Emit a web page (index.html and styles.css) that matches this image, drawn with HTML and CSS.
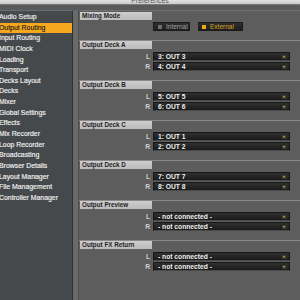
FILE: index.html
```html
<!DOCTYPE html>
<html>
<head>
<meta charset="utf-8">
<link rel="stylesheet" href="styles.css">
</head>
<body>
<div class="window">
  <div class="titlebar"><span class="title">Preferences</span></div>
  <div class="main">
    <nav class="sidebar">
      <ul class="nav">
        <li>Audio Setup</li>
        <li class="active">Output Routing</li>
        <li>Input Routing</li>
        <li>MIDI Clock</li>
        <li>Loading</li>
        <li>Transport</li>
        <li>Decks Layout</li>
        <li>Decks</li>
        <li>Mixer</li>
        <li>Global Settings</li>
        <li>Effects</li>
        <li>Mix Recorder</li>
        <li>Loop Recorder</li>
        <li>Broadcasting</li>
        <li>Browser Details</li>
        <li>Layout Manager</li>
        <li>File Management</li>
        <li>Controller Manager</li>
      </ul>
    </nav>
    <div class="gutter"></div>
    <section class="content">
      <div class="group first">
        <div class="ghead">Mixing Mode</div>
        <div class="radios">
          <div class="radio"><span class="box"></span><span>Internal</span></div>
          <div class="radio on"><span class="box"></span><span>External</span></div>
        </div>
      </div>
      <div class="group">
        <div class="ghead">Output Deck A</div>
        <div class="row"><span class="lbl">L</span><div class="sel"><span>3: OUT 3</span><i class="arrow"></i></div></div>
        <div class="row"><span class="lbl">R</span><div class="sel"><span>4: OUT 4</span><i class="arrow"></i></div></div>
      </div>
      <div class="group">
        <div class="ghead">Output Deck B</div>
        <div class="row"><span class="lbl">L</span><div class="sel"><span>5: OUT 5</span><i class="arrow"></i></div></div>
        <div class="row"><span class="lbl">R</span><div class="sel"><span>6: OUT 6</span><i class="arrow"></i></div></div>
      </div>
      <div class="group">
        <div class="ghead">Output Deck C</div>
        <div class="row"><span class="lbl">L</span><div class="sel"><span>1: OUT 1</span><i class="arrow"></i></div></div>
        <div class="row"><span class="lbl">R</span><div class="sel"><span>2: OUT 2</span><i class="arrow"></i></div></div>
      </div>
      <div class="group">
        <div class="ghead">Output Deck D</div>
        <div class="row"><span class="lbl">L</span><div class="sel"><span>7: OUT 7</span><i class="arrow"></i></div></div>
        <div class="row"><span class="lbl">R</span><div class="sel"><span>8: OUT 8</span><i class="arrow"></i></div></div>
      </div>
      <div class="group">
        <div class="ghead">Output Preview</div>
        <div class="row"><span class="lbl">L</span><div class="sel"><span>- not connected -</span><i class="arrow"></i></div></div>
        <div class="row"><span class="lbl">R</span><div class="sel"><span>- not connected -</span><i class="arrow"></i></div></div>
      </div>
      <div class="group">
        <div class="ghead">Output FX Return</div>
        <div class="row"><span class="lbl">L</span><div class="sel"><span>- not connected -</span><i class="arrow"></i></div></div>
        <div class="row"><span class="lbl">R</span><div class="sel"><span>- not connected -</span><i class="arrow"></i></div></div>
      </div>
    </section>
  </div>
</div>
</body>
</html>
```

FILE: styles.css
```css
html, body {
  margin: 0;
  padding: 0;
  width: 300px;
  height: 300px;
  overflow: hidden;
  background: #5a5a5a;
  font-family: "Liberation Sans", Arial, sans-serif;
}
.window {
  width: 300px;
  height: 300px;
  display: flex;
  flex-direction: column;
}
.titlebar {
  height: 4px;
  flex: none;
  background: linear-gradient(#e2e2e2, #c9c9c9);
  border-bottom: 1px solid #7a7a7a;
  overflow: hidden;
  text-align: center;
}
.title {
  display: block;
  font-size: 7px;
  line-height: 7px;
  margin-top: -3px;
  color: #555;
}
.main {
  flex: 1;
  display: flex;
  padding-top: 5px;
  min-height: 0;
}
.sidebar {
  width: 73px;
  flex: none;
  background: #46494b;
  border-top: 1px solid #6a6d6f;
  border-right: 1px solid #2f3234;
  border-top-right-radius: 2px;
  box-sizing: border-box;
  overflow: hidden;
}
.nav {
  list-style: none;
  margin: 0;
  padding: 1px 0 0 0;
}
.nav li {
  height: 10.65px;
  line-height: 10.65px;
  font-size: 6.9px;
  color: #f2f2f2;
  text-indent: -1px;
  white-space: nowrap;
  width: 72px;
  -webkit-text-stroke: 0.15px #f2f2f2;
}
.nav li.active {
  background: #f5a71e;
  color: #1c1c1c;
  -webkit-text-stroke: 0.15px #1c1c1c;
}
.gutter {
  width: 5px;
  flex: none;
  background: #6a6a6a;
  border-right: 1px solid #505050;
}
.content {
  flex: 1;
  background: #5d5d5d;
  border-top: 1px solid #707070;
  padding-left: 1px;
  overflow: hidden;
}
.group {
  height: 40px;
  box-sizing: border-box;
  border-top: 1px solid #8a8a8a;
  margin-left: -1px;
  padding-left: 1px;
}
.group.first {
  height: 29px;
  border-top: none;
  padding-top: 1px;
}
.ghead {
  width: 72px;
  height: 8px;
  line-height: 8px;
  background: linear-gradient(#cdcdcd, #bcbcbc);
  color: #1e1e1e;
  font-size: 6.3px;
  font-weight: bold;
  padding-left: 2px;
  box-sizing: border-box;
  white-space: nowrap;
  margin-bottom: 3px;
}
.first .ghead {
  margin-bottom: 2px;
}
.radios {
  display: flex;
  gap: 8px;
  margin-left: 73px;
}
.radio {
  height: 9px;
  display: flex;
  align-items: center;
  gap: 4px;
  padding-left: 4px;
  box-sizing: border-box;
  background: linear-gradient(#2e2e2e, #1f1f1f);
  border: 1px solid #1a1a1a;
  font-size: 6.5px;
  color: #a4a4a4;
}
.radio:first-child { width: 37px; }
.radio.on { width: 45px; color: #d9a426; padding-left: 3px; }
.box {
  width: 4px;
  height: 4px;
  background: #6e6e6e;
  flex: none;
}
.radio.on .box { background: #eeaa14; }
.row {
  display: flex;
  align-items: center;
  height: 9px;
  margin-bottom: 1px;
}
.lbl {
  width: 70px;
  text-align: right;
  margin-right: 3px;
  font-size: 6.7px;
  font-weight: bold;
  color: #d0d0d0;
}
.sel {
  width: 137px;
  height: 9px;
  box-sizing: border-box;
  display: flex;
  align-items: center;
  justify-content: space-between;
  padding: 0 2px 0 4px;
  background: linear-gradient(#303030, #1b1b1b);
  border: 1px solid #161616;
  border-bottom-color: #4a4a4a;
  font-size: 6.7px;
  font-weight: bold;
  color: #f0f0f0;
  white-space: nowrap;
}
.arrow {
  width: 5px;
  height: 4px;
  background: #3a3a3a;
  border-radius: 1px;
  position: relative;
}
.arrow::after {
  content: "";
  position: absolute;
  left: 1px;
  top: 1px;
  border-left: 1.5px solid transparent;
  border-right: 1.5px solid transparent;
  border-top: 2px solid #f0b020;
}
```
